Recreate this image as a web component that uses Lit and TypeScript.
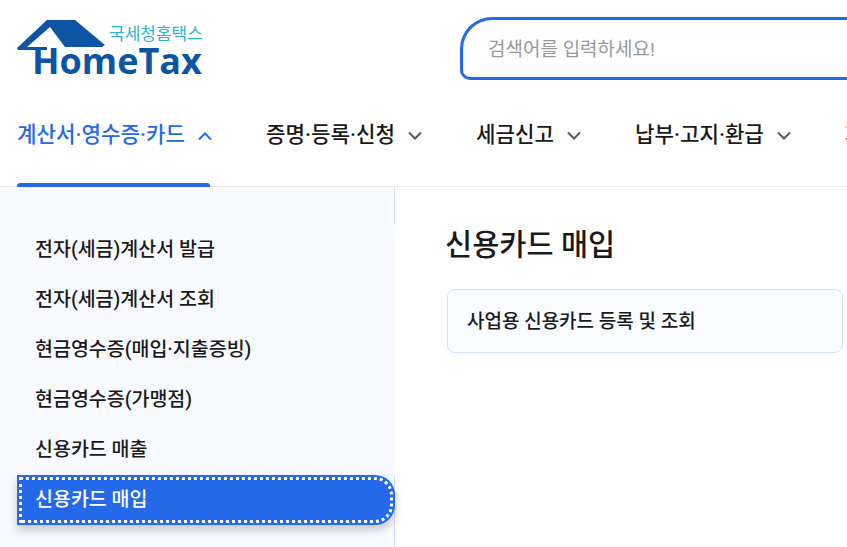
import { LitElement, css, html } from "lit";
import { customElement } from "lit/decorators.js";

const NAV = [
  { label: "계산서·영수증·카드", active: true },
  { label: "증명·등록·신청", active: false },
  { label: "세금신고", active: false },
  { label: "납부·고지·환급", active: false },
  { label: "지급명세·자료·공익법인", active: false },
];

const SIDE = [
  "전자(세금)계산서 발급",
  "전자(세금)계산서 조회",
  "현금영수증(매입·지출증빙)",
  "현금영수증(가맹점)",
  "신용카드 매출",
  "신용카드 매입",
];

@customElement("app-root")
export class AppRoot extends LitElement {
  static styles = css`
    :host {
      display: block;
      width: 847px;
      height: 547px;
      overflow: hidden;
      background: #fff;
      font-family: Roboto, "Noto Sans CJK KR", sans-serif;
      color: #1a1a1a;
    }
    .top {
      display: flex;
      align-items: flex-start;
      height: 100px;
      box-sizing: border-box;
      padding: 17px 0 0 17px;
      gap: 257px;
    }
    .logo {
      position: relative;
      flex: none;
      width: 186px;
      height: 63px;
    }
    .logo svg {
      position: absolute;
      left: 0;
      top: 3px;
    }
    .logo .ko {
      position: absolute;
      left: 92px;
      top: 6px;
      font-size: 17px;
      line-height: 22px;
      color: #2fb3cc;
      white-space: nowrap;
    }
    .logo .en {
      position: absolute;
      left: 15px;
      top: 22px;
      font-family: "Open Sans", sans-serif;
      font-size: 36px;
      line-height: 44px;
      font-weight: 700;
      color: #0c54a4;
      white-space: nowrap;
    }
    .search {
      flex: none;
      width: 500px;
      height: 63px;
      box-sizing: border-box;
      border: 3px solid #2569eb;
      border-right: none;
      border-radius: 32px 0 0 10px;
      padding: 0 0 2px 25px;
      display: flex;
      align-items: center;
      font-size: 19px;
      color: #999;
    }
    nav {
      display: flex;
      height: 87px;
      box-sizing: border-box;
      border-bottom: 1px solid #e8ebef;
      padding-left: 17px;
      white-space: nowrap;
    }
    .tab {
      position: relative;
      flex: none;
      display: flex;
      align-items: flex-start;
      gap: 12px;
      padding-top: 21px;
      margin-right: 56px;
      font-size: 21.2px;
      line-height: 28px;
      font-weight: 500;
      color: #1a1a1a;
    }
    .tab svg {
      margin-top: 9px;
      margin-right: -3px;
      flex: none;
      stroke: #55585f;
    }
    .tab.active {
      color: #2569eb;
    }
    .tab.active svg {
      stroke: #2569eb;
    }
    .tab.active::after {
      content: "";
      position: absolute;
      left: 0;
      right: 0;
      bottom: -1px;
      height: 4px;
      background: #2569eb;
      border-radius: 3px 3px 0 0;
    }
    .body {
      display: flex;
      height: 360px;
    }
    aside {
      flex: none;
      width: 395px;
      box-sizing: border-box;
      /* the side line only shows above the list and below the active item */
      background:
        linear-gradient(#cfe0ff 0 38px, transparent 38px 288px, #cfe0ff 288px) right / 1px 100% no-repeat,
        #f8faff;
      padding: 38px 0 0 17px;
    }
    .item {
      position: relative;
      height: 50px;
      box-sizing: border-box;
      padding: 0 0 6px 18px;
      display: flex;
      align-items: center;
      font-size: 19.5px;
      font-weight: 500;
      color: #1a1a1a;
    }
    .item.active {
      width: 378px;
      background: #2569eb;
      color: #fff;
      border-radius: 0 20px 20px 0;
      box-shadow: 0 5px 10px rgba(0, 0, 0, 0.2);
    }
    .item.active::after {
      content: "";
      position: absolute;
      inset: 2px;
      border: 3px dotted #fff;
      border-radius: 0 18px 18px 0;
    }
    main {
      flex: 1;
      min-width: 0;
      padding: 37px 4px 0 50px;
    }
    h2 {
      margin: 0;
      font-size: 29.5px;
      line-height: 42px;
      font-weight: 500;
      color: #1a1a1a;
    }
    .card {
      margin: 23px 0 0 2px;
      height: 64px;
      box-sizing: border-box;
      border: 1px solid #d4e2fb;
      border-radius: 8px;
      background: #fbfcff;
      padding: 0 0 4px 19px;
      display: flex;
      align-items: center;
      font-size: 19px;
      font-weight: 500;
    }
  `;

  chevron(up: boolean) {
    return html`<svg width="16" height="12" viewBox="0 0 16 12" fill="none" stroke-width="2">
      <path d=${up ? "M2 9.5 8 3.5l6 6" : "M2 2.5 8 8.5l6-6"}></path>
    </svg>`;
  }

  render() {
    return html`
      <div class="top">
        <div class="logo">
          <svg width="100" height="40" viewBox="0 0 100 40">
            <path
              fill="#0c54a4"
              d="M0 28 30 0H58L88 25 85 27H48L33 7 10 27H30V30H1Z"
            ></path>
          </svg>
          <span class="ko">국세청홈택스</span>
          <span class="en">HomeTax</span>
        </div>
        <div class="search">검색어를 입력하세요!</div>
      </div>
      <nav>
        ${NAV.map(
          (t) => html`<div class="tab ${t.active ? "active" : ""}">
            <span>${t.label}</span>${this.chevron(t.active)}
          </div>`
        )}
      </nav>
      <div class="body">
        <aside>
          ${SIDE.map(
            (s, i) => html`<div class="item ${i === SIDE.length - 1 ? "active" : ""}">${s}</div>`
          )}
        </aside>
        <main>
          <h2>신용카드 매입</h2>
          <div class="card">사업용 신용카드 등록 및 조회</div>
        </main>
      </div>
    `;
  }
}
